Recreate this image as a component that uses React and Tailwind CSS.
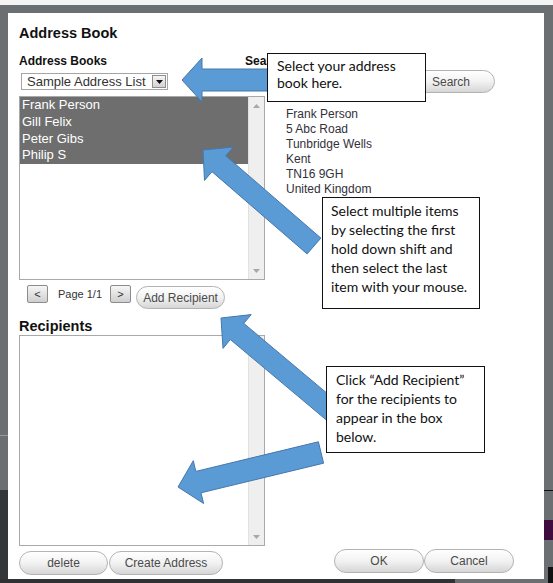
import React from "react";

function arrowPts(tip, tail, sw, hw, hl) {
  const dx = tail[0] - tip[0];
  const dy = tail[1] - tip[1];
  const len = Math.hypot(dx, dy);
  const ux = dx / len;
  const uy = dy / len;
  const px = -uy;
  const py = ux;
  const pt = (a, b) => [tip[0] + ux * a + px * b, tip[1] + uy * a + py * b];
  const pts = [
    pt(0, 0),
    pt(hl, -hw / 2),
    pt(hl, -sw / 2),
    pt(len, -sw / 2),
    pt(len, sw / 2),
    pt(hl, sw / 2),
    pt(hl, hw / 2),
  ];
  return pts.map((p) => p.map((v) => v.toFixed(1)).join(",")).join(" ");
}

const ARROWS = [
  { tip: [182, 80], tail: [275, 80], sw: 22, hw: 44, hl: 20 },
  { tip: [203, 150], tail: [314, 246], sw: 21, hw: 44, hl: 21 },
  { tip: [221, 318], tail: [345, 422], sw: 21, hw: 44, hl: 21 },
  { tip: [178, 487], tail: [321, 452.5], sw: 22, hw: 44, hl: 21 },
];

function Pill({ children, className }) {
  return (
    <div
      className={
        "flex items-center justify-center rounded-full border border-[#b3b3b3] bg-linear-to-b from-white via-[#f2f2f2] to-[#d6d6d6] text-[12px] text-[#4a4a4a] " +
        className
      }
    >
      {children}
    </div>
  );
}

function SmallBtn({ children }) {
  return (
    <div className="w-[21px] h-[18px] flex items-center justify-center rounded-[2px] border border-[#8c8c8c] bg-linear-to-b from-[#f6f6f6] to-[#cfcfcf] text-[11px] text-[#333] leading-none">
      {children}
    </div>
  );
}

function Scrollbar() {
  return (
    <div className="w-[16px] h-full bg-[#efefef] border-l border-[#e2e2e2] flex flex-col justify-between items-center pt-[7px] pb-[6px]">
      <svg width="7" height="4">
        <polygon points="0,4 3.5,0 7,4" fill="#a8a8a8" />
      </svg>
      <svg width="7" height="4">
        <polygon points="0,0 7,0 3.5,4" fill="#a8a8a8" />
      </svg>
    </div>
  );
}

export default function App() {
  const names = ["Frank Person", "Gill Felix", "Peter Gibs", "Philip S"];
  const addr = [
    "Frank Person",
    "5 Abc Road",
    "Tunbridge Wells",
    "Kent",
    "TN16 9GH",
    "United Kingdom",
  ];
  return (
    <div
      className="relative w-[553px] h-[583px] overflow-hidden bg-[#6c6f71]"
      style={{ fontFamily: '"Liberation Sans", Arial, sans-serif' }}
    >
      {/* backdrop details */}
      <div className="h-[5px] bg-[#f4f4f4]" />
      <div className="absolute left-0 top-[490px] w-[8px] h-[93px] bg-[#33373a]" />
      <div className="absolute left-0 top-[435px] w-[8px] h-[1px] bg-[#9a9a9a]" />
      <div className="absolute right-0 top-[490px] w-[9px] h-[1px] bg-[#111]" />
      <div className="absolute right-0 top-[520px] w-[9px] h-[20px] bg-[#3e0c3e]" />
      <div className="absolute right-0 top-[567px] w-[5px] h-[16px] bg-[#111]" />
      <div className="absolute left-0 top-[579px] w-[455px] h-[4px] bg-[#2f3133]" />

      {/* dialog */}
      <div className="mt-[8px] ml-[8px] w-[536px] h-[566px] bg-white pt-[12px] pl-[11px] text-[#222]">
        <div className="text-[14.5px] leading-[17px] font-bold text-[#111]">Address Book</div>

        <div className="mt-[12px] flex text-[12px] leading-[14px] font-bold text-[#111]">
          <div className="w-[226px]">Address Books</div>
          <div>Search</div>
        </div>

        <div className="mt-[2px] h-[23px] flex items-center">
          <div className="ml-[2px] w-[147px] h-[17px] border border-[#a5a5a5] flex items-center justify-between pl-[5px] pr-[1px] text-[13px] leading-none text-[#333]">
            <span>Sample Address List</span>
            <div className="w-[14px] h-[13px] border border-[#8e8e8e] bg-linear-to-b from-[#f6f6f6] to-[#d2d2d2] flex items-center justify-center">
              <svg width="7" height="4">
                <polygon points="0,0 7,0 3.5,4" fill="#111" />
              </svg>
            </div>
          </div>
          <div className="ml-[77px] w-[158px] h-[19px] border border-[#aaaaaa] bg-white" />
          <Pill className="ml-[4px] w-[88px] h-[23px]">Search</Pill>
        </div>

        <div className="mt-[3px] flex">
          <div className="w-[246px] h-[184px] border border-[#a9a9a9] flex">
            <div className="flex-1">
              {names.map((n) => (
                <div
                  key={n}
                  className="h-[16.75px] leading-[16.75px] bg-[#6e6e6e] text-white text-[13px] pl-[2px]"
                >
                  {n}
                </div>
              ))}
            </div>
            <Scrollbar />
          </div>
          <div className="ml-[21px] pt-[11px] text-[12px] leading-[15px] text-[#33303a]">
            {addr.map((a) => (
              <div key={a}>{a}</div>
            ))}
          </div>
        </div>

        <div className="mt-[5px] flex items-start">
          <div className="ml-[8px]">
            <SmallBtn>&lt;</SmallBtn>
          </div>
          <div className="ml-[10px] h-[18px] flex items-center text-[11px] text-[#333]">Page 1/1</div>
          <div className="ml-[8px]">
            <SmallBtn>&gt;</SmallBtn>
          </div>
          <Pill className="ml-[5px] mt-[1px] w-[89px] h-[23px]">Add Recipient</Pill>
        </div>

        <div className="mt-[9px] text-[14.5px] leading-[17px] font-bold text-[#111]">Recipients</div>

        <div className="w-[246px] h-[211px] border border-[#a9a9a9] flex">
          <div className="flex-1" />
          <Scrollbar />
        </div>

        <div className="mt-[5px] flex items-start">
          <Pill className="w-[89px] h-[24px]">delete</Pill>
          <Pill className="ml-[1px] w-[114px] h-[24px]">Create Address</Pill>
          <Pill className="ml-[111px] -mt-[2px] w-[90px] h-[24px]">OK</Pill>
          <Pill className="-mt-[2px] w-[90px] h-[24px]">Cancel</Pill>
        </div>
      </div>

      {/* annotation arrows */}
      <svg className="absolute left-0 top-0 pointer-events-none" width="553" height="583">
        {ARROWS.map((a, i) => (
          <polygon
            key={i}
            points={arrowPts(a.tip, a.tail, a.sw, a.hw, a.hl)}
            fill="#5b9bd5"
            stroke="#4677ad"
            strokeWidth="1"
            strokeLinejoin="miter"
          />
        ))}
      </svg>

      {/* callouts */}
      <div
        className="absolute left-[267px] top-[53px] w-[159px] h-[49px] border border-[#111] bg-white pl-[9px] pt-[3px] text-[14px] leading-[17px] text-[#111] whitespace-nowrap"
        style={{ fontFamily: 'Lato, "Open Sans", sans-serif' }}
      >
        <div>Select your address</div>
        <div>book here.</div>
      </div>
      <div
        className="absolute left-[322px] top-[197px] w-[158px] h-[112px] border border-[#111] bg-white pl-[8px] pt-[3px] text-[14px] leading-[19px] text-[#111] whitespace-nowrap"
        style={{ fontFamily: 'Lato, "Open Sans", sans-serif' }}
      >
        <div>Select multiple items</div>
        <div>by selecting the first</div>
        <div>hold down shift and</div>
        <div>then select the last</div>
        <div>item with your mouse.</div>
      </div>
      <div
        className="absolute left-[326px] top-[366px] w-[159px] h-[87px] border border-[#111] bg-white pl-[9px] pt-[3px] text-[14px] leading-[19px] text-[#111] whitespace-nowrap"
        style={{ fontFamily: 'Lato, "Open Sans", sans-serif' }}
      >
        <div>Click “Add Recipient”</div>
        <div>for the recipients to</div>
        <div>appear in the box</div>
        <div>below.</div>
      </div>
    </div>
  );
}
